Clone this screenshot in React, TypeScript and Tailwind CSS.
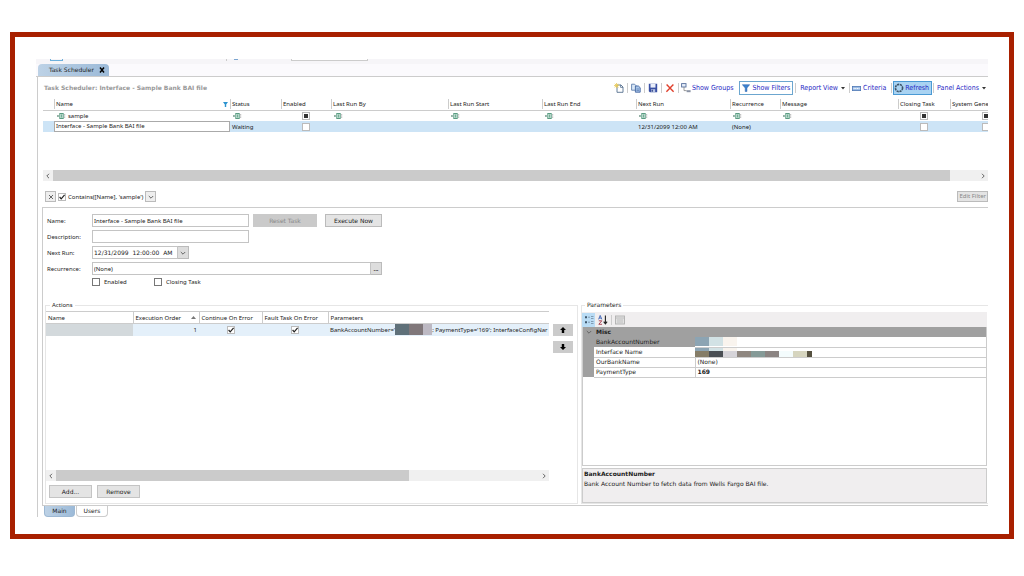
import { type ReactNode } from "react";

type Column = { title: string; width: string; filter?: "text" | "check" };

const columns: Column[] = [
  { title: "", width: "w-[11px]" },
  { title: "Name", width: "w-[176px]", filter: "text" },
  { title: "Status", width: "w-[51px]", filter: "text" },
  { title: "Enabled", width: "w-[50px]", filter: "check" },
  { title: "Last Run By", width: "w-[117px]", filter: "text" },
  { title: "Last Run Start", width: "w-[94px]", filter: "text" },
  { title: "Last Run End", width: "w-[94px]", filter: "text" },
  { title: "Next Run", width: "w-[94px]", filter: "text" },
  { title: "Recurrence", width: "w-[50px]", filter: "text" },
  { title: "Message", width: "w-auto", filter: "text" },
  { title: "Closing Task", width: "w-[52px]", filter: "check" },
  { title: "System Gene", width: "w-[38px]", filter: "check" },
];

const task: Record<string, string> = {
  Name: "Interface - Sample Bank BAI file",
  Status: "Waiting",
  "Next Run": "12/31/2099 12:00 AM",
  Recurrence: "(None)",
};

function Check({
  label,
  checked = false,
  mixed = false,
  dark = false,
}: {
  label: string;
  checked?: boolean;
  mixed?: boolean;
  dark?: boolean;
}) {
  return (
    <span className="relative inline-flex size-2 shrink-0">
      <input
        type="checkbox"
        aria-label={label}
        defaultChecked={checked}
        className={
          dark
            ? "size-2 appearance-none border border-[#777] bg-white"
            : "size-2 appearance-none border border-[#bbb] bg-white"
        }
      />
      {mixed && (
        <span className="pointer-events-none absolute inset-0.5 bg-[#333]" />
      )}
      {checked && (
        <svg
          viewBox="0 0 8 8"
          className="pointer-events-none absolute inset-0 size-2"
        >
          <path
            d="M1.6 4 3.2 5.8 6.6 1.9"
            fill="none"
            stroke="#222"
            strokeWidth="1.2"
          />
        </svg>
      )}
    </span>
  );
}

function ContainsIcon() {
  return (
    <svg viewBox="0 0 9 6" className="h-1.5 w-[9px] shrink-0">
      <rect x="2.8" y="0.5" width="3.4" height="5" fill="#d9efe6" stroke="#5a9c82" strokeWidth="1" />
      <path d="M4.5 1.4v3.2" stroke="#5a9c82" strokeWidth="0.8" />
      <rect x="0.2" y="2" width="1.5" height="2" fill="#7a9f90" />
      <path d="M7.7 1.4v1M7.7 3.6v1" stroke="#777" strokeWidth="0.9" />
    </svg>
  );
}

function Separator() {
  return <span className="h-2.5 w-px shrink-0 bg-[#ccc]" />;
}

function Caret() {
  return (
    <svg viewBox="0 0 4 3" className="h-[3px] w-1 shrink-0">
      <path d="M0 0h4L2 2.6z" fill="#333" />
    </svg>
  );
}

function ToolButton({
  label,
  className = "",
  children,
}: {
  label: string;
  className?: string;
  children: ReactNode;
}) {
  return (
    <button
      aria-label={label}
      className={`flex h-3.5 shrink-0 items-center whitespace-nowrap ${className}`}
    >
      {children}
    </button>
  );
}

function Toolbar() {
  return (
    <div className="flex items-center font-['DejaVu_Sans_Condensed','DejaVu_Sans',sans-serif] text-[7px] text-[#2828c4]">
      <ToolButton label="New" className="mr-[3px]">
        <svg viewBox="0 0 10 10" className="size-2.5">
          <path d="M3 2h4l2 2v5.3H3z" fill="#fff" stroke="#56708f" strokeWidth="0.9" />
          <path d="M6.6 1.8v2.6H9" fill="none" stroke="#56708f" strokeWidth="0.8" />
          <path d="M2.6 0v5.2M0 2.6h5.2M.8.8l3.6 3.6M4.4.8.8 4.4" stroke="#e8c95a" strokeWidth="0.9" />
        </svg>
      </ToolButton>
      <Separator />
      <ToolButton label="Copy" className="mx-[3px]">
        <svg viewBox="0 0 10 10" className="size-2.5">
          <path d="M.6 1.2h3l1.6 1.6v4.4H.6z" fill="#dbe8f7" stroke="#5d7fae" strokeWidth="0.9" />
          <path d="M4.4 3h3l1.8 1.7v4.5H4.4z" fill="#a9c6ea" stroke="#4467a0" strokeWidth="0.9" />
          <path d="M5.5 6h2.6M5.5 7.6h2.6" stroke="#4467a0" strokeWidth="0.6" />
        </svg>
      </ToolButton>
      <Separator />
      <ToolButton label="Save" className="mx-[3px]">
        <svg viewBox="0 0 10 10" className="size-2.5">
          <path d="M.8.8h8.4v8.4H1.8l-1-1z" fill="#3a50a4" />
          <path d="M2.5 1h5v3.6h-5z" fill="#e9eefa" />
          <path d="M3 6.2h4.2v3H3z" fill="#b9c5e4" />
          <path d="M3.6 6.7h1.2v2.1H3.6z" fill="#26397e" />
        </svg>
      </ToolButton>
      <Separator />
      <ToolButton label="Delete" className="mx-[3px]">
        <svg viewBox="0 0 10 10" className="size-2.5">
          <path d="M1.6 1.5 8.6 8.8M8.4 1.5 1.4 8.8" stroke="#e0402c" strokeWidth="1.4" />
        </svg>
      </ToolButton>
      <Separator />
      <ToolButton label="Show Groups" className="mr-1.5 ml-0.5 gap-px">
        <svg viewBox="0 0 10 10" className="size-2.5">
          <rect x="0.6" y="0.6" width="4.4" height="3.4" fill="#e6eefa" stroke="#566f9c" strokeWidth="0.9" />
          <path d="M3 4v3.6h2.6" fill="none" stroke="#777" strokeWidth="0.7" />
          <rect x="5.6" y="7.2" width="4" height="2" fill="#8a93a5" />
        </svg>
        Show Groups
      </ToolButton>
      <ToolButton label="Show Filters" className="mr-0.5 gap-0.5 border border-[#6ca6cf] px-0.5">
        <svg viewBox="0 0 10 10" className="size-2">
          <path d="M.4.8h9.2L6.2 5v4.4H4V5z" fill="#3d82cf" stroke="#2b5fa8" strokeWidth="0.6" />
        </svg>
        Show Filters
      </ToolButton>
      <Separator />
      <ToolButton label="Report View" className="mx-1 gap-[3px]">
        Report View
        <Caret />
      </ToolButton>
      <Separator />
      <ToolButton label="Criteria" className="mr-[5px] ml-0.5 gap-0.5">
        <svg viewBox="0 0 9 5" className="h-[5px] w-[9px]">
          <rect x="0.4" y="0.4" width="8.2" height="4.2" fill="#9dbde6" stroke="#4f78b4" strokeWidth="0.8" />
          <path d="M1.5 2.5h6" stroke="#fff" strokeWidth="0.9" strokeDasharray="1.2 .5" />
        </svg>
        Criteria
      </ToolButton>
      <Separator />
      <ToolButton label="Refresh" className="mx-px gap-px border border-[#4a9ad4] bg-[#a9d3f2] pr-0.5">
        <svg viewBox="0 0 10 10" className="size-2.5">
          <circle cx="5" cy="5" r="3.6" fill="none" stroke="#3c5368" strokeWidth="1.6" strokeDasharray="2.2 .7" />
        </svg>
        Refresh
      </ToolButton>
      <Separator />
      <ToolButton label="Panel Actions" className="mr-0.5 ml-[3px] gap-[3px]">
        Panel Actions
        <Caret />
      </ToolButton>
    </div>
  );
}

function TaskGrid() {
  return (
    <table className="w-full table-fixed border-collapse overflow-hidden">
      <thead>
        <tr className="h-[11px] border-b border-[#ccc]">
          {columns.map((c) => (
            <th key={c.title} className={`${c.width} p-0 text-left font-normal`}>
              <div
                className={
                  c.title
                    ? "flex h-2.5 items-center justify-between overflow-hidden border-l border-[#ccc] pl-px whitespace-nowrap"
                    : "h-2.5"
                }
              >
                {c.title}
                {c.title === "Name" && (
                  <svg viewBox="0 0 5 5" className="mr-0.5 size-[5px]">
                    <path d="M0 0h5L3.2 2.4V5H1.8V2.4z" fill="#2c93cf" />
                  </svg>
                )}
              </div>
            </th>
          ))}
        </tr>
      </thead>
      <tbody>
        <tr className="h-[11px]">
          {columns.map((c) => (
            <td key={c.title} className="overflow-hidden p-0">
              {c.filter === "text" && (
                <div className="flex items-center gap-0.5 pl-[3px]">
                  <ContainsIcon />
                  {c.title === "Name" && "sample"}
                </div>
              )}
              {c.filter === "check" && (
                <div className={c.title === "System Gene" ? "flex pl-8" : "flex justify-center"}>
                  <Check label={`Filter ${c.title}`} mixed />
                </div>
              )}
            </td>
          ))}
        </tr>
        <tr className="h-[11px] bg-[#cde4f6]">
          {columns.map((c) => (
            <td key={c.title} className="overflow-hidden p-0 whitespace-nowrap">
              {c.title === "Name" ? (
                <div className="h-[11px] border border-[#aaa] bg-white pl-px leading-[9px]">
                  {task.Name}
                </div>
              ) : c.filter === "check" ? (
                <div className={c.title === "System Gene" ? "flex pl-8" : "flex justify-center"}>
                  <Check label={c.title} />
                </div>
              ) : (
                <div className="pl-0.5">{task[c.title]}</div>
              )}
            </td>
          ))}
        </tr>
      </tbody>
    </table>
  );
}

function Chevron({ d }: { d: string }) {
  return (
    <svg viewBox="0 0 6 6" className="size-1.5 shrink-0">
      <path d={d} fill="none" stroke="#666" strokeWidth="1" />
    </svg>
  );
}

const LEFT = "M4 .8 1.8 3 4 5.2";
const RIGHT = "M2 .8 4.2 3 2 5.2";
const DOWN = "M.8 2 3 4.2 5.2 2";

function ScrollBar({ thumb }: { thumb: string }) {
  return (
    <div className="flex h-[11px] items-center bg-[#f0f0f0]">
      <button aria-label="Scroll left" className="flex w-2.5 justify-center">
        <Chevron d={LEFT} />
      </button>
      <div className="flex h-full flex-1">
        <div className={`h-full bg-[#cbcbcb] ${thumb}`} />
      </div>
      <button aria-label="Scroll right" className="flex w-2.5 justify-center">
        <Chevron d={RIGHT} />
      </button>
    </div>
  );
}

function FilterBar() {
  return (
    <div className="flex h-[13px] items-center">
      <button
        aria-label="Clear filter"
        className="ml-0.5 flex size-[11px] items-center justify-center border border-[#bbb] bg-[#eee]"
      >
        <Chevron d="M1 1 5 5M5 1 1 5" />
      </button>
      <span className="ml-0.5 flex items-center gap-0.5">
        <Check label="Use filter" checked />
        Contains([Name], 'sample')
      </span>
      <button
        aria-label="Recent filters"
        className="ml-0.5 flex size-[11px] items-center justify-center border border-[#bbb] bg-[#eee]"
      >
        <Chevron d={DOWN} />
      </button>
      <button className="ml-auto h-[11px] border border-[#bbb] bg-[#e4e4e4] px-px leading-[9px] text-[#888]">
        Edit Filter
      </button>
    </div>
  );
}

const field = "h-[13px] border border-[#c4c4c4] bg-white px-px outline-none";
const wide = "font-['DejaVu_Sans',sans-serif]";

function TaskForm() {
  return (
    <div className="grid grid-cols-[45px_1fr] items-center gap-y-[3px] pt-1.5 pl-1">
      <label htmlFor="name">Name:</label>
      <div className="flex">
        <input id="name" className={`w-[157px] ${field}`} defaultValue={task.Name} />
        <button className={`ml-1 h-[13px] w-16 bg-[#cacaca] text-[#888] ${wide}`}>Reset Task</button>
        <button className={`ml-2 h-[13px] w-[57px] border border-[#bbb] bg-[#e4e4e4] ${wide}`}>
          Execute Now
        </button>
      </div>
      <label htmlFor="description">Description:</label>
      <div className="flex">
        <input id="description" className={`w-[157px] ${field}`} />
      </div>
      <label htmlFor="nextRun">Next Run:</label>
      <div className="flex">
        <input
          id="nextRun"
          className={`w-[86px] ${field} ${wide}`}
          defaultValue="12/31/2099  12:00:00  AM"
        />
        <button
          aria-label="Pick date"
          className="flex h-[13px] w-[11px] items-center justify-center border border-l-0 border-[#bbb] bg-[#ddd]"
        >
          <Chevron d={DOWN} />
        </button>
      </div>
      <label htmlFor="recurrence">Recurrence:</label>
      <div className="flex">
        <input id="recurrence" className={`w-[279px] ${field}`} defaultValue="(None)" />
        <button
          aria-label="Edit recurrence"
          className="flex h-[13px] w-[11px] items-center justify-center border border-l-0 border-[#bbb] bg-[#ddd] font-bold"
        >
          ...
        </button>
      </div>
      <div className="col-start-2 flex">
        <div className="flex w-[62px] items-center gap-1">
          <Check label="Enabled" dark />
          Enabled
        </div>
        <div className="flex items-center gap-1">
          <Check label="Closing Task" dark />
          Closing Task
        </div>
      </div>
    </div>
  );
}

function MoveButton({ label, d }: { label: string; d: string }) {
  return (
    <button aria-label={label} className="flex h-3 w-5 items-center justify-center bg-[#cbcbcb]">
      <svg viewBox="0 0 6 6" className="size-1.5">
        <path d={d} fill="#000" />
      </svg>
    </button>
  );
}

function Actions() {
  const head = "border-y border-r border-[#ccc] p-0 pl-0.5 text-left font-normal";
  return (
    <fieldset className="flex min-w-0 flex-1 flex-col border border-[#e6e6e6] pb-[5px]">
      <legend className="ml-1 px-0.5 leading-2">Actions</legend>
      <div className="flex flex-1 gap-1 pr-1">
        <div className="flex min-w-0 flex-1 flex-col">
          <table className="mt-0.5 w-full table-fixed border-collapse overflow-hidden whitespace-nowrap">
            <thead>
              <tr className="h-3">
                <th className={`w-[87px] ${head}`}>Name</th>
                <th className={`w-[66px] ${head}`}>
                  <div className="flex items-center justify-between pr-[3px]">
                    Execution Order
                    <svg viewBox="0 0 5 3" className="h-[3px] w-[5px]">
                      <path d="M0 3h5L2.5 0z" fill="#777" />
                    </svg>
                  </div>
                </th>
                <th className={`w-[63px] ${head}`}>Continue On Error</th>
                <th className={`w-[66px] ${head}`}>Fault Task On Error</th>
                <th className="border-y border-[#ccc] p-0 pl-0.5 text-left font-normal">Parameters</th>
              </tr>
            </thead>
            <tbody>
              <tr className="h-3 bg-[#e4f0fa]">
                <td className="bg-[#d3d9dc] p-0" />
                <td className="p-0 pr-0.5 text-right">1</td>
                <td className="p-0">
                  <div className="flex justify-center">
                    <Check label="Continue On Error" checked />
                  </div>
                </td>
                <td className="p-0">
                  <div className="flex justify-center">
                    <Check label="Fault Task On Error" checked />
                  </div>
                </td>
                <td className="overflow-hidden p-0">
                  <div className="flex items-center pl-0.5">
                    BankAccountNumber='
                    <span className="h-[11px] w-3.5 shrink-0 bg-[#5f7079]" />
                    <span className="h-[11px] w-3.5 shrink-0 bg-[#80777a]" />
                    <span className="h-[11px] w-[9px] shrink-0 bg-[#bdb9c3]" />
                    <span>; PaymentType='169'; InterfaceConfigNar</span>
                  </div>
                </td>
              </tr>
            </tbody>
          </table>
          <div className="mt-auto">
            <ScrollBar thumb="w-[73%]" />
          </div>
        </div>
        <div className="flex flex-col gap-[5px] pt-[15px]">
          <MoveButton label="Move up" d="M3 0 6 3H4.2v3H1.8V3H0z" />
          <MoveButton label="Move down" d="M3 6 0 3h1.8V0h2.4v3H6z" />
        </div>
      </div>
      <div className={`mt-1 ml-[3px] flex gap-[5px] ${wide}`}>
        <button className="h-[13px] w-[43px] border border-[#c4c4c4] bg-[#e4e4e4]">Add...</button>
        <button className="h-[13px] w-[43px] border border-[#c4c4c4] bg-[#e4e4e4]">Remove</button>
      </div>
    </fieldset>
  );
}

function Parameters() {
  const name = "border-b border-[#ccc] p-0 pl-0.5";
  const value = "border-b border-l border-[#ccc] p-0 pl-0.5";
  return (
    <fieldset className={`flex w-[407px] shrink-0 flex-col border border-r-0 border-[#e6e6e6] pr-px ${wide}`}>
      <legend className="ml-[3px] px-0.5 leading-2">Parameters</legend>
      <div className="mt-[3px] flex h-[15px] items-center gap-[3px] bg-[#f0eeef]">
        <button
          aria-label="Categorized"
          className="flex h-3.5 w-[13px] items-center justify-center bg-[#b9dcf5]"
        >
          <svg viewBox="0 0 10 10" className="size-2.5">
            <path d="M1 1.2h2v2h-2zM1 6.2h2v2h-2z" fill="#3f566b" />
            <path d="M4 2.2h2M4 7.2h2M7 1.5h2.5M7 3.5h2.5M7 6.5h2.5M7 8.5h2.5" stroke="#7b93ab" strokeWidth="0.9" />
          </svg>
        </button>
        <button aria-label="Alphabetical" className="flex items-center">
          <svg viewBox="0 0 10 10" className="size-2.5">
            <path d="M.6 4.4 2.2.4l1.6 4M1.2 3.1h2" fill="none" stroke="#3c62b5" strokeWidth="0.9" />
            <path d="M.8 5.8h3L.8 9.3h3.2" fill="none" stroke="#a63a4c" strokeWidth="0.9" />
            <path d="M7.4.6v8M5.7 6.6l1.7 2.2 1.7-2.2" fill="none" stroke="#222" strokeWidth="1.1" />
          </svg>
        </button>
        <Separator />
        <button aria-label="Property pages">
          <svg viewBox="0 0 10 10" className="size-2.5">
            <rect x="0.5" y="1" width="9" height="8" fill="#e2e2e2" stroke="#b0b0b0" strokeWidth="0.9" />
            <path d="M.5 3h9M2 5h6M2 7h6" stroke="#bbb" strokeWidth="0.9" />
          </svg>
        </button>
      </div>
      <div className="flex-1 border border-t-0 border-[#ccc]">
        <table className="w-full table-fixed border-collapse">
          <tbody>
            <tr className="h-2.5 bg-[#a0a0a0]">
              <th className="w-[11px] p-0">
                <div className="flex justify-center">
                  <Chevron d={DOWN} />
                </div>
              </th>
              <th className="w-[101px] p-0 pl-0.5 text-left">Misc</th>
              <th />
            </tr>
            <tr className="h-2.5">
              <td className="bg-[#a0a0a0] p-0" />
              <td className="bg-[#a0a0a0] p-0 pl-0.5">BankAccountNumber</td>
              <td className="border-b border-[#ccc] p-0 align-top">
                <div className="flex h-[9px] w-[117px] bg-white">
                  <span className="w-3.5 bg-[#8ca4b3]" />
                  <span className="w-3.5 bg-[#d2e2e5]" />
                  <span className="w-3.5 bg-[#f9f4ee]" />
                </div>
              </td>
            </tr>
            <tr className="h-2.5">
              <td className="bg-[#a0a0a0] p-0" />
              <td className={name}>Interface Name</td>
              <td className="border-b border-[#ccc] p-0 align-top">
                <div className="flex h-[9px] w-[117px] flex-col">
                  <div className="flex h-[3px]">
                    <span className="w-3.5 bg-[#8ca4b3]" />
                    <span className="w-3.5 bg-[#d2e2e5]" />
                    <span className="w-3.5 bg-[#f9f4ee]" />
                  </div>
                  <div className="flex flex-1">
                    <span className="w-3.5 bg-[#857d68]" />
                    <span className="w-3.5 bg-[#4a4f54]" />
                    <span className="w-3.5 bg-[#d6d4d9]" />
                    <span className="w-3.5 bg-[#8f8780]" />
                    <span className="w-3.5 bg-[#859a97]" />
                    <span className="w-3.5 bg-[#8b8482]" />
                    <span className="w-3.5 bg-[#f4fcfd]" />
                    <span className="w-3.5 bg-[#d6d5bf]" />
                    <span className="flex-1 bg-[#55503f]" />
                  </div>
                </div>
              </td>
            </tr>
            <tr className="h-2.5">
              <td className="bg-[#a0a0a0] p-0" />
              <td className={name}>OurBankName</td>
              <td className={value}>(None)</td>
            </tr>
            <tr className="h-2.5">
              <td className="bg-[#a0a0a0] p-0" />
              <td className={name}>PaymentType</td>
              <td className={`font-bold ${value}`}>169</td>
            </tr>
          </tbody>
        </table>
      </div>
      <div className="mt-0.5 h-[35px] border border-[#ccc] bg-[#f0eeef] px-px leading-[10px]">
        <p className="font-bold">BankAccountNumber</p>
        <p>Bank Account Number to fetch data from Wells Fargo BAI file.</p>
      </div>
    </fieldset>
  );
}

export default function App() {
  return (
    <div className="min-h-screen bg-white pt-8 pr-2.5 pb-9 pl-2.5">
      <div className="border-[5px] border-[#a82000] pt-[22px] pr-[21px] pb-[17px] pl-[21px] font-['Noto_Sans',sans-serif] text-[6px] leading-2 text-[#222]">
        <div className="flex h-[5px] items-start bg-[#f6f5f8] pl-3.5">
          <span className="h-0.5 w-[13px] border-x border-b border-[#6cb0dc]" />
          <span className="ml-[163px] h-0.5 w-px bg-[#ccc]" />
          <span className="ml-[7px] h-px w-1 bg-[#7aa5d0]" />
          <span className="ml-[53px] h-0.5 w-[77px] border-x border-b border-[#ccc] bg-white" />
        </div>
        <div className="flex h-[13px] items-end border-b border-[#ccc] bg-[#fbfafd] pl-0.5">
          <button
            className={`flex h-3 w-[71px] items-center gap-[5px] rounded-t-sm bg-linear-to-r from-[#bdd2e6] to-[#9cbad8] pl-[11px] ${wide}`}
          >
            Task Scheduler
            <svg viewBox="0 0 6 6" className="size-1.5 shrink-0">
              <path d="M1 .6 5 5.4M5 .6 1 5.4" stroke="#000" strokeWidth="1.5" />
            </svg>
          </button>
        </div>
        <div className="ml-px border-l border-[#ccc] pl-1">
          <div className="flex items-center justify-between py-1">
            <h1 className={`pl-0.5 font-bold text-[#999] ${wide}`}>
              Task Scheduler: Interface - Sample Bank BAI file
            </h1>
            <Toolbar />
          </div>
          <div className="pl-px">
            <TaskGrid />
            <div className="mt-[38px]">
              <ScrollBar thumb="w-[97%]" />
            </div>
            <div className="mt-[9px]">
              <FilterBar />
            </div>
          </div>
          <div className="mt-1 border-b border-l border-t border-[#ccc]">
            <TaskForm />
            <div className="mt-[15px] flex h-[204px] gap-[3px] pb-px pl-0.5">
              <Actions />
              <Parameters />
            </div>
          </div>
          <div className={`flex gap-px pl-0.5 ${wide}`}>
            <button className="h-[11px] w-[31px] rounded-b-sm border border-t-0 border-[#9db8d3] bg-linear-to-r from-[#bdd2e6] to-[#9cbad8]">
              Main
            </button>
            <button className="h-[11px] w-8 rounded-b-sm border border-t-0 border-[#ccc] bg-white">
              Users
            </button>
          </div>
        </div>
      </div>
    </div>
  );
}
